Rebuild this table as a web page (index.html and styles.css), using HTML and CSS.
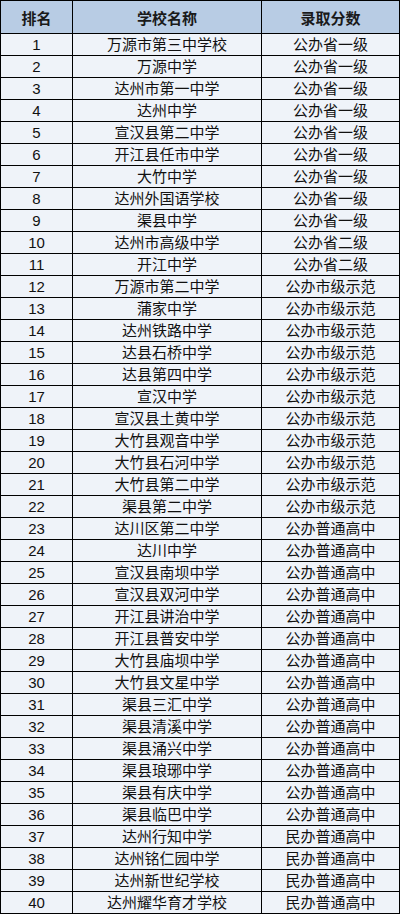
FILE: index.html
```html
<!DOCTYPE html>
<html lang="zh-CN">
<head>
<meta charset="utf-8">
<title>达州高中录取分数</title>
<link rel="stylesheet" href="styles.css">
</head>
<body>
<table class="rank-table">
  <colgroup>
    <col class="c-rank">
    <col class="c-name">
    <col class="c-score">
  </colgroup>
  <thead>
    <tr><th>排名</th><th>学校名称</th><th>录取分数</th></tr>
  </thead>
  <tbody>
    <tr><td>1</td><td>万源市第三中学校</td><td>公办省一级</td></tr>
    <tr><td>2</td><td>万源中学</td><td>公办省一级</td></tr>
    <tr><td>3</td><td>达州市第一中学</td><td>公办省一级</td></tr>
    <tr><td>4</td><td>达州中学</td><td>公办省一级</td></tr>
    <tr><td>5</td><td>宣汉县第二中学</td><td>公办省一级</td></tr>
    <tr><td>6</td><td>开江县任市中学</td><td>公办省一级</td></tr>
    <tr><td>7</td><td>大竹中学</td><td>公办省一级</td></tr>
    <tr><td>8</td><td>达州外国语学校</td><td>公办省一级</td></tr>
    <tr><td>9</td><td>渠县中学</td><td>公办省一级</td></tr>
    <tr><td>10</td><td>达州市高级中学</td><td>公办省二级</td></tr>
    <tr><td>11</td><td>开江中学</td><td>公办省二级</td></tr>
    <tr><td>12</td><td>万源市第二中学</td><td>公办市级示范</td></tr>
    <tr><td>13</td><td>蒲家中学</td><td>公办市级示范</td></tr>
    <tr><td>14</td><td>达州铁路中学</td><td>公办市级示范</td></tr>
    <tr><td>15</td><td>达县石桥中学</td><td>公办市级示范</td></tr>
    <tr><td>16</td><td>达县第四中学</td><td>公办市级示范</td></tr>
    <tr><td>17</td><td>宣汉中学</td><td>公办市级示范</td></tr>
    <tr><td>18</td><td>宣汉县土黄中学</td><td>公办市级示范</td></tr>
    <tr><td>19</td><td>大竹县观音中学</td><td>公办市级示范</td></tr>
    <tr><td>20</td><td>大竹县石河中学</td><td>公办市级示范</td></tr>
    <tr><td>21</td><td>大竹县第二中学</td><td>公办市级示范</td></tr>
    <tr><td>22</td><td>渠县第二中学</td><td>公办市级示范</td></tr>
    <tr><td>23</td><td>达川区第二中学</td><td>公办普通高中</td></tr>
    <tr><td>24</td><td>达川中学</td><td>公办普通高中</td></tr>
    <tr><td>25</td><td>宣汉县南坝中学</td><td>公办普通高中</td></tr>
    <tr><td>26</td><td>宣汉县双河中学</td><td>公办普通高中</td></tr>
    <tr><td>27</td><td>开江县讲治中学</td><td>公办普通高中</td></tr>
    <tr><td>28</td><td>开江县普安中学</td><td>公办普通高中</td></tr>
    <tr><td>29</td><td>大竹县庙坝中学</td><td>公办普通高中</td></tr>
    <tr><td>30</td><td>大竹县文星中学</td><td>公办普通高中</td></tr>
    <tr><td>31</td><td>渠县三汇中学</td><td>公办普通高中</td></tr>
    <tr><td>32</td><td>渠县清溪中学</td><td>公办普通高中</td></tr>
    <tr><td>33</td><td>渠县涌兴中学</td><td>公办普通高中</td></tr>
    <tr><td>34</td><td>渠县琅琊中学</td><td>公办普通高中</td></tr>
    <tr><td>35</td><td>渠县有庆中学</td><td>公办普通高中</td></tr>
    <tr><td>36</td><td>渠县临巴中学</td><td>公办普通高中</td></tr>
    <tr><td>37</td><td>达州行知中学</td><td>民办普通高中</td></tr>
    <tr><td>38</td><td>达州铭仁园中学</td><td>民办普通高中</td></tr>
    <tr><td>39</td><td>达州新世纪学校</td><td>民办普通高中</td></tr>
    <tr><td>40</td><td>达州耀华育才学校</td><td>民办普通高中</td></tr>
  </tbody>
</table>
</body>
</html>
```

FILE: styles.css
```css
html, body {
  margin: 0;
  padding: 0;
  background: #ffffff;
}

.rank-table {
  width: 400px;
  table-layout: fixed;
  border-collapse: separate;
  border-spacing: 1px;
  background: #000000;
  font-family: "Liberation Sans", "Noto Sans CJK SC", sans-serif;
  font-size: 15px;
  color: #111111;
}

.c-rank { width: 71px; }
.c-name { width: 188px; }
.c-score { width: 137px; }

.rank-table th,
.rank-table td {
  box-sizing: border-box;
  padding: 0;
  text-align: center;
  vertical-align: middle;
  white-space: nowrap;
  overflow: hidden;
}

.rank-table th {
  height: 32px;
  background: #b8cce4;
  font-weight: bold;
  color: #1a1a1a;
}

.rank-table td {
  height: 21px;
  line-height: 21px;
  background: #eff3f9;
}
```
